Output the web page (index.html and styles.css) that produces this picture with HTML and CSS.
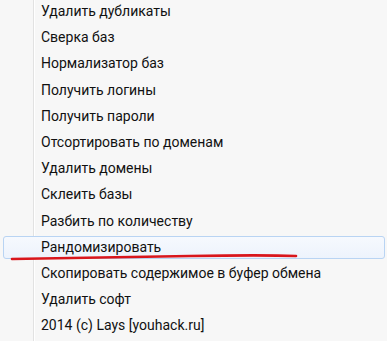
FILE: index.html
```html
<!DOCTYPE html>
<html lang="ru">
<head>
    <meta charset="UTF-8">
    <meta name="viewport" content="width=device-width, initial-scale=1.0">
    <title>Меню</title>
    <link rel="stylesheet" href="styles.css">
</head>
<body>
    <ul class="menu">
        <li class="item">Удалить дубликаты</li>
        <li class="item">Сверка баз</li>
        <li class="item">Нормализатор баз</li>
        <li class="item">Получить логины</li>
        <li class="item">Получить пароли</li>
        <li class="item">Отсортировать по доменам</li>
        <li class="item">Удалить домены</li>
        <li class="item">Склеить базы</li>
        <li class="item">Разбить по количеству</li>
        <li class="item active">Рандомизировать</li>
        <li class="item">Скопировать содержимое в буфер обмена</li>
        <li class="item">Удалить софт</li>
        <li class="item">2014 (c) Lays [youhack.ru]</li>
    </ul>
    <!-- hand-drawn marker over the highlighted item -->
    <svg class="scribble" width="300" height="14" viewBox="0 0 300 14">
        <path d="M2 9 C 60 8, 120 7, 180 6 S 260 5, 286 6" fill="none" stroke="#d9161c" stroke-width="2.6" stroke-linecap="round"/>
    </svg>
</body>
</html>
```

FILE: styles.css
```css
body {
    margin: 0;
    background-color: #f7f7f7;
    font-family: Roboto, "Noto Sans", sans-serif;
    color: #111111;
    height: 100vh;
    overflow: hidden;
}
.menu {
    list-style: none;
    margin: -2px 0 0 0;
    padding: 0;
    min-height: 345px;
    background: linear-gradient(to right, transparent 33px, #e2e2e2 33px, #e2e2e2 34px, #ffffff 34px, #ffffff 35px, transparent 35px);
}
.item {
    height: 26.2px;
    line-height: 26.2px;
    padding-left: 41px;
    font-size: 14px;
    white-space: nowrap;
}
.item.active {
    box-sizing: border-box;
    height: 23px;
    line-height: 21px;
    margin: 2px 2px 1.2px 3px;
    padding-left: 37px;
    border: 1px solid #b9d4f3;
    border-radius: 3px;
    background: linear-gradient(to bottom, #f6f9fe, #edf3fc);
}
.scribble {
    position: absolute;
    left: 10px;
    top: 250px;
}
```
